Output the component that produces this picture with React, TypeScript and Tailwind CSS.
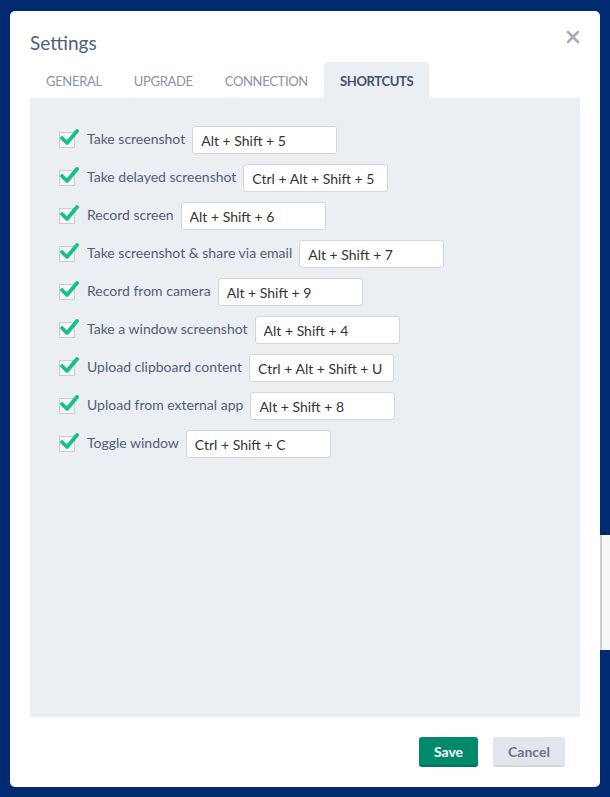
import { useState } from "react";

const shortcuts = [
  { label: "Take screenshot", keys: "Alt + Shift + 5" },
  { label: "Take delayed screenshot", keys: "Ctrl + Alt + Shift + 5" },
  { label: "Record screen", keys: "Alt + Shift + 6" },
  { label: "Take screenshot & share via email", keys: "Alt + Shift + 7" },
  { label: "Record from camera", keys: "Alt + Shift + 9" },
  { label: "Take a window screenshot", keys: "Alt + Shift + 4" },
  { label: "Upload clipboard content", keys: "Ctrl + Alt + Shift + U" },
  { label: "Upload from external app", keys: "Alt + Shift + 8" },
  { label: "Toggle window", keys: "Ctrl + Shift + C" },
];

const tabs = ["General", "Upgrade", "Connection", "Shortcuts"];

function Check() {
  return (
    <span className="relative w-4 h-4 border border-[#c9ced6] bg-[#f4f6f8] shrink-0">
      <svg
        className="absolute -left-[1px] -top-[6px]"
        width="20"
        height="20"
        viewBox="0 0 20 20"
        aria-hidden="true"
      >
        <path
          d="M3 11 L8 16 L18 4"
          fill="none"
          stroke="#15c18a"
          strokeWidth="3.8"
          strokeLinecap="round"
          strokeLinejoin="round"
        />
      </svg>
    </span>
  );
}

export default function App() {
  const [active, setActive] = useState("Shortcuts");

  return (
    <div className="w-[610px] h-[797px] bg-[#012a71] relative overflow-hidden font-['Lato','Open_Sans',sans-serif]">
      {/* window peeking out behind the dialog */}
      <div className="absolute left-[600px] top-[535px] w-[20px] h-[115px] bg-[#f7f7f7] border-l-2 border-[#cfcfcf]" />

      <div className="absolute left-[10px] top-[11px] w-[590px] h-[776px] bg-white rounded-[5px] flex flex-col">
        <div className="flex items-center justify-between pl-5 pr-5 pt-[10px] h-[52px]">
          <h1 className="text-[19px] text-[#505f79] leading-none">Settings</h1>
          <button className="text-[#a5adba] -mt-[10px]" aria-label="Close">
            <svg width="14" height="14" viewBox="0 0 14 14">
              <path d="M2 2 L12 12 M12 2 L2 12" stroke="currentColor" strokeWidth="2.6" strokeLinecap="round" />
            </svg>
          </button>
        </div>

        <div className="flex px-5 mt-[-1px]">
          {tabs.map((t) => (
            <button
              key={t}
              onClick={() => setActive(t)}
              className={`px-4 pt-1 h-[36px] text-[13px] uppercase tracking-tight rounded-t-[3px] ${
                active === t ? "bg-[#ebeef2] text-[#42526e] font-bold" : "text-[#8993a4]"
              }`}
            >
              {t}
            </button>
          ))}
        </div>

        <div className="mx-5 h-[619px] bg-[#ebeef2] pl-[29px] pt-[28px] flex flex-col gap-[10px]">
          {shortcuts.map((s) => (
            <div key={s.label} className="flex items-center">
              <Check />
              <span className="ml-3 mr-[7px] text-[14px] text-[#505f79] -mt-1">{s.label}</span>
              <input
                readOnly
                value={s.keys}
                className="w-[145px] h-[28px] bg-white border border-[#d0d5dc] rounded-[3px] px-2 text-[14px] text-[#333] outline-none"
              />
            </div>
          ))}
        </div>

        <div className="flex justify-end gap-[15px] pr-[35px] pt-[20px]">
          <button className="w-[59px] h-[30px] rounded-[3px] bg-[#008a6b] text-white text-[14px] font-bold border-b-2 border-[#00735a]">
            Save
          </button>
          <button className="w-[72px] h-[30px] rounded-[3px] bg-[#e2e6ec] text-[#6b778c] text-[14px] font-bold border-b-2 border-[#d3d8df]">
            Cancel
          </button>
        </div>
      </div>
    </div>
  );
}
